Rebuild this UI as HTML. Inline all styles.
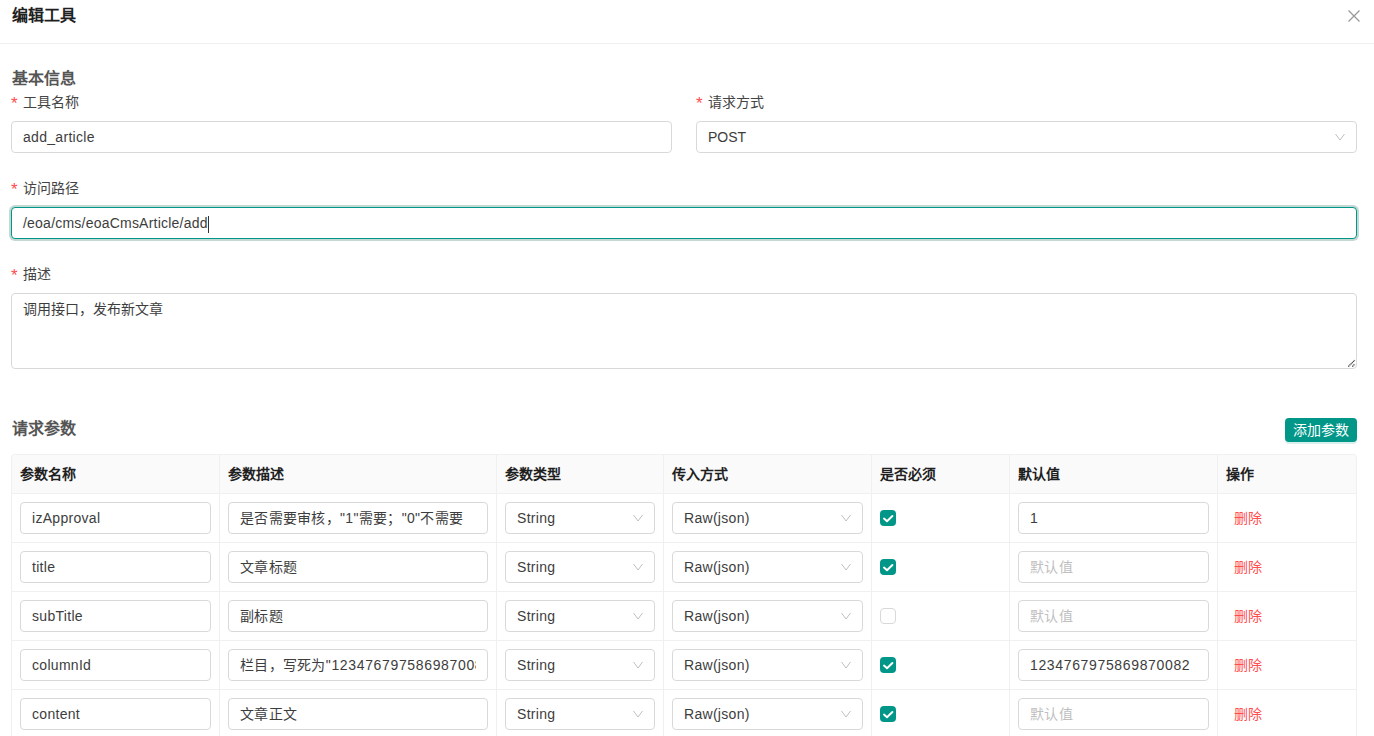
<!DOCTYPE html>
<html lang="zh-CN"><head><meta charset="utf-8">
<style>
*{box-sizing:border-box;margin:0;padding:0}
html,body{width:1374px;height:736px;overflow:hidden;background:#fff}
body{font-family:"Liberation Sans",sans-serif;font-size:14px;color:#333;position:relative}
.abs{position:absolute}
.title{left:12px;top:4px;font-size:16px;font-weight:bold;color:#1f1f1f;line-height:24px}
.hdr-line{left:0;top:43px;width:1374px;height:1px;background:#f0f0f0}
.close{left:1347px;top:9px;width:14px;height:14px}
.sec{left:12px;font-size:16px;font-weight:bold;color:#555;line-height:24px}
.lbl{line-height:22px;color:#444;font-size:14px}
.lbl .req{color:#ff4d4f;display:inline-block;width:12px;font-size:17px;line-height:14px;vertical-align:top;position:relative;top:6px;left:0}
.inp{letter-spacing:0.3px;border:1px solid #d9d9d9;border-radius:4px;height:32px;background:#fff;padding:0 11px;line-height:30px;color:#3d3d3d;white-space:nowrap;overflow:hidden}
.focus{border-color:#009688;box-shadow:0 0 0 2px rgba(20,100,85,0.25)}
.arrow{position:absolute;right:11px;top:11px;width:10px;height:8px}
.btn{left:1285px;top:418px;width:72px;height:24px;background:#009688;color:#fff;border-radius:4px;line-height:24px;text-align:center;font-size:14px;box-shadow:0 2px 0 rgba(0,150,136,0.15)}
table{position:absolute;left:11px;top:454px;width:1346px;border-collapse:separate;border-spacing:0;border-left:1px solid #f0f0f0;border-top:1px solid #f0f0f0;border-radius:4px 4px 0 0;table-layout:fixed}
th,td{border-right:1px solid #f0f0f0;border-bottom:1px solid #f0f0f0;padding:0 8px;text-align:left;vertical-align:middle}
th{background:#fafafa;height:39px;padding-bottom:2px;font-weight:bold;color:#1f1f1f;font-size:14px}
td{height:49px}
th:last-child{border-top-right-radius:4px}
th:first-child{border-top-left-radius:4px}
td .inp{position:relative}
.ph{color:#bfbfbf}
.cb{width:16px;height:16px;border-radius:4px;background:#009688;position:relative}
.cb.off{background:#fff;border:1px solid #d9d9d9}
.del{color:#ff4d4f;padding-left:8px;position:relative;top:-1px}
</style></head><body>
<div class="abs title">编辑工具</div>
<svg class="abs close" viewBox="0 0 14 14"><path d="M1.5 1.5L12.5 12.5M12.5 1.5L1.5 12.5" stroke="#999" stroke-width="1.3" fill="none"/></svg>
<div class="abs hdr-line"></div>

<div class="abs sec" style="top:67px">基本信息</div>

<div class="abs lbl" style="left:11px;top:91px"><span class="req">*</span>工具名称</div>
<div class="abs inp" style="left:11px;top:121px;width:661px">add_article</div>

<div class="abs lbl" style="left:696px;top:91px"><span class="req">*</span>请求方式</div>
<div class="abs inp" style="left:696px;top:121px;width:661px;letter-spacing:0">POST<svg class="arrow" viewBox="0 0 10 8"><path d="M0.5 1L5 7L9.5 1" stroke="#bfbfbf" stroke-width="1" fill="none"/></svg></div>

<div class="abs lbl" style="left:11px;top:177px"><span class="req">*</span>访问路径</div>
<div class="abs inp focus" style="left:11px;top:207px;width:1346px;letter-spacing:0.22px">/eoa/cms/eoaCmsArticle/add<span style="display:inline-block;width:1px;height:17px;background:#333;vertical-align:middle;margin-left:0"></span></div>

<div class="abs lbl" style="left:11px;top:263px"><span class="req">*</span>描述</div>
<div class="abs inp" style="left:11px;top:293px;width:1346px;height:76px;line-height:22px;padding:4px 11px;letter-spacing:0">调用接口，发布新文章<svg style="position:absolute;right:0;bottom:0" width="10" height="10" viewBox="0 0 10 10"><path d="M2.3 8.6L8.8 2.1M6.3 8.6L8.8 6.1" stroke="#444" stroke-width="1.3" stroke-dasharray="1.2 0.5" fill="none"/></svg></div>

<div class="abs sec" style="top:417px">请求参数</div>
<div class="abs btn">添加参数</div>

<table>
<colgroup><col style="width:208px"><col style="width:277px"><col style="width:167px"><col style="width:208px"><col style="width:138px"><col style="width:208px"><col style="width:139px"></colgroup>
<tr><th>参数名称</th><th>参数描述</th><th>参数类型</th><th>传入方式</th><th>是否必须</th><th>默认值</th><th>操作</th></tr>
<tr><td><div class="inp">izApproval</div></td><td><div class="inp">是否需要审核，"1"需要；"0"不需要</div></td><td><div class="inp">String<svg class="arrow" viewBox="0 0 10 8"><path d="M0.5 1L5 7L9.5 1" stroke="#bfbfbf" stroke-width="1" fill="none"/></svg></div></td><td><div class="inp">Raw(json)<svg class="arrow" viewBox="0 0 10 8"><path d="M0.5 1L5 7L9.5 1" stroke="#bfbfbf" stroke-width="1" fill="none"/></svg></div></td><td><div class="cb"><svg viewBox="0 0 16 16" width="16" height="16"><path d="M4 8.6L7 11.3L12.4 6" stroke="#fff" stroke-width="2" fill="none" stroke-linecap="round" stroke-linejoin="round"/></svg></div></td><td><div class="inp">1</div></td><td><span class="del">删除</span></td></tr>
<tr><td><div class="inp">title</div></td><td><div class="inp">文章标题</div></td><td><div class="inp">String<svg class="arrow" viewBox="0 0 10 8"><path d="M0.5 1L5 7L9.5 1" stroke="#bfbfbf" stroke-width="1" fill="none"/></svg></div></td><td><div class="inp">Raw(json)<svg class="arrow" viewBox="0 0 10 8"><path d="M0.5 1L5 7L9.5 1" stroke="#bfbfbf" stroke-width="1" fill="none"/></svg></div></td><td><div class="cb"><svg viewBox="0 0 16 16" width="16" height="16"><path d="M4 8.6L7 11.3L12.4 6" stroke="#fff" stroke-width="2" fill="none" stroke-linecap="round" stroke-linejoin="round"/></svg></div></td><td><div class="inp ph">默认值</div></td><td><span class="del">删除</span></td></tr>
<tr><td><div class="inp">subTitle</div></td><td><div class="inp">副标题</div></td><td><div class="inp">String<svg class="arrow" viewBox="0 0 10 8"><path d="M0.5 1L5 7L9.5 1" stroke="#bfbfbf" stroke-width="1" fill="none"/></svg></div></td><td><div class="inp">Raw(json)<svg class="arrow" viewBox="0 0 10 8"><path d="M0.5 1L5 7L9.5 1" stroke="#bfbfbf" stroke-width="1" fill="none"/></svg></div></td><td><div class="cb off"></div></td><td><div class="inp ph">默认值</div></td><td><span class="del">删除</span></td></tr>
<tr><td><div class="inp">columnId</div></td><td><div class="inp"><div style="overflow:hidden;white-space:nowrap">栏目，写死为<span style="letter-spacing:0.65px">"1234767975869870082"</span></div></div></td><td><div class="inp">String<svg class="arrow" viewBox="0 0 10 8"><path d="M0.5 1L5 7L9.5 1" stroke="#bfbfbf" stroke-width="1" fill="none"/></svg></div></td><td><div class="inp">Raw(json)<svg class="arrow" viewBox="0 0 10 8"><path d="M0.5 1L5 7L9.5 1" stroke="#bfbfbf" stroke-width="1" fill="none"/></svg></div></td><td><div class="cb"><svg viewBox="0 0 16 16" width="16" height="16"><path d="M4 8.6L7 11.3L12.4 6" stroke="#fff" stroke-width="2" fill="none" stroke-linecap="round" stroke-linejoin="round"/></svg></div></td><td><div class="inp" style="letter-spacing:0.65px">1234767975869870082</div></td><td><span class="del">删除</span></td></tr>
<tr><td><div class="inp">content</div></td><td><div class="inp">文章正文</div></td><td><div class="inp">String<svg class="arrow" viewBox="0 0 10 8"><path d="M0.5 1L5 7L9.5 1" stroke="#bfbfbf" stroke-width="1" fill="none"/></svg></div></td><td><div class="inp">Raw(json)<svg class="arrow" viewBox="0 0 10 8"><path d="M0.5 1L5 7L9.5 1" stroke="#bfbfbf" stroke-width="1" fill="none"/></svg></div></td><td><div class="cb"><svg viewBox="0 0 16 16" width="16" height="16"><path d="M4 8.6L7 11.3L12.4 6" stroke="#fff" stroke-width="2" fill="none" stroke-linecap="round" stroke-linejoin="round"/></svg></div></td><td><div class="inp ph">默认值</div></td><td><span class="del">删除</span></td></tr>
</table>
</body></html>
